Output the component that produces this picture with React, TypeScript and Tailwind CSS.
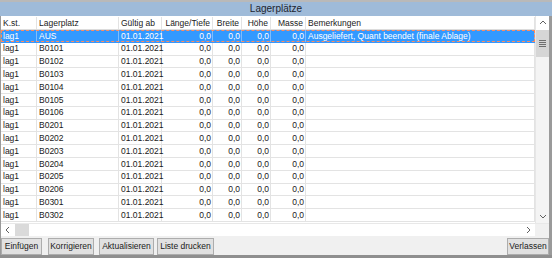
import React from 'react';

type Col = { label: string; w: string; right?: boolean };

const cols: Col[] = [
  { label: 'K.st.', w: 'w-[36px]' },
  { label: 'Lagerplatz', w: 'w-[82px]' },
  { label: 'Gültig ab', w: 'w-[43px]' },
  { label: 'Länge/Tiefe', w: 'w-[51px]', right: true },
  { label: 'Breite', w: 'w-[29px]', right: true },
  { label: 'Höhe', w: 'w-[29px]', right: true },
  { label: 'Masse', w: 'w-[35px]', right: true },
  { label: 'Bemerkungen', w: 'flex-1' },
];

const places = [
  'AUS', 'B0101', 'B0102', 'B0103', 'B0104', 'B0105', 'B0106', 'B0201',
  'B0202', 'B0203', 'B0204', 'B0205', 'B0206', 'B0301', 'B0302',
];

const rows = places.map((p, i) => [
  'lag1', p, '01.01.2021', '0,0', '0,0', '0,0', '0,0',
  i === 0 ? 'Ausgeliefert, Quant beendet (finale Ablage)' : '',
]);

function Chevron({ dir }: { dir: 'up' | 'down' | 'left' | 'right' }) {
  const d = {
    up: 'M1 5 L4 2 L7 5',
    down: 'M1 2 L4 5 L7 2',
    left: 'M5 1 L2 4 L5 7',
    right: 'M2 1 L5 4 L2 7',
  }[dir];
  return (
    <svg width="8" height="8" viewBox="0 0 8 8">
      <path d={d} fill="none" stroke="#606060" strokeWidth="1" />
    </svg>
  );
}

function Btn({ children, className = '' }: { children: React.ReactNode; className?: string }) {
  return (
    <div
      className={`h-[17px] flex items-center justify-center border border-[#adadad] bg-[#e1e1e1] text-[#1a1a1a] ${className}`}
    >
      {children}
    </div>
  );
}

export default function App() {
  return (
    <div
      className="w-[552px] h-[258px] flex flex-col bg-[#f0f0f0] border-t-2 border-t-[#b9b9b9] border-b-[3px] border-b-[#8f8f8f] text-[8.5px] leading-none text-[#1a1a1a] overflow-hidden"
      style={{ fontFamily: '"Liberation Sans", Arial, sans-serif' }}
    >
      {/* title */}
      <div className="h-[14px] shrink-0 bg-[#9fbbd9] flex items-center justify-center text-[10px] text-[#1c2430]">
        Lagerplätze
      </div>

      <div className="flex-1 flex flex-col border-l border-l-[#9a9a9a] border-r-[3px] border-r-[#9a9a9a]">
        {/* grid + vertical scrollbar */}
        <div className="flex h-[207px] bg-white">
          <div className="flex-1 flex flex-col">
            <div className="flex h-[14px] border-b border-[#dcdcdc] pt-px">
              {cols.map((c) => (
                <div
                  key={c.label}
                  className={`${c.w} shrink-0 flex items-center border-r border-[#e3e3e3] ${
                    c.right ? 'justify-end pr-[2px]' : 'pl-[2px]'
                  }`}
                >
                  {c.label}
                </div>
              ))}
            </div>
            {rows.map((r, ri) => {
              const sel = ri === 0;
              return (
                <div
                  key={ri}
                  className={`relative flex h-[12.8px] shrink-0 border-b ${
                    sel ? 'bg-[#3399ff] text-white border-[#3399ff]' : 'border-[#e3e3e3]'
                  }`}
                >
                  {r.map((v, ci) => (
                    <div
                      key={ci}
                      className={`${cols[ci].w} shrink-0 flex items-center whitespace-nowrap border-r ${
                        sel ? 'border-[#7dbdff]' : 'border-[#e3e3e3]'
                      } ${cols[ci].right ? 'justify-end pr-px' : 'pl-[2px]'}`}
                    >
                      {v}
                    </div>
                  ))}
                  {sel && (
                    <div className="absolute inset-0 border border-dashed border-[#ff8a5c]" />
                  )}
                </div>
              );
            })}
          </div>
          {/* vertical scrollbar */}
          <div className="w-[14px] shrink-0 flex flex-col bg-[#f4f4f4] border-l border-[#e6e6e6]">
            <div className="h-[14px] flex items-center justify-center bg-white">
              <Chevron dir="up" />
            </div>
            <div className="h-[27px] bg-[#d6d6d6] flex flex-col items-center justify-center gap-[1px]">
              <div className="w-[7px] h-px bg-[#707070]" />
              <div className="w-[7px] h-px bg-[#707070]" />
              <div className="w-[7px] h-px bg-[#707070]" />
              <div className="w-[7px] h-px bg-[#707070]" />
            </div>
            <div className="flex-1" />
            <div className="h-[13px] flex items-center justify-center">
              <Chevron dir="down" />
            </div>
          </div>
        </div>

        {/* horizontal scrollbar */}
        <div className="flex h-[13px] bg-white border-t border-[#e8e8e8]">
          <div className="w-[13px] flex items-center justify-center">
            <Chevron dir="left" />
          </div>
          <div className="w-[14px] ml-[1px] bg-[#dadada]" />
          <div className="flex-1" />
          <div className="w-[13px] flex items-center justify-center">
            <Chevron dir="right" />
          </div>
          <div className="w-[14px] bg-[#f0f0f0]" />
        </div>

        {/* buttons */}
        <div className="flex items-center pt-[2px]">
          <Btn className="w-[41px]">Einfügen</Btn>
          <Btn className="w-[46px] ml-[6px]">Korrigieren</Btn>
          <Btn className="w-[55px] ml-[5px]">Aktualisieren</Btn>
          <Btn className="w-[57px] ml-[3px]">Liste drucken</Btn>
          <div className="flex-1" />
          <Btn className="w-[42px]">Verlassen</Btn>
        </div>
      </div>
    </div>
  );
}
